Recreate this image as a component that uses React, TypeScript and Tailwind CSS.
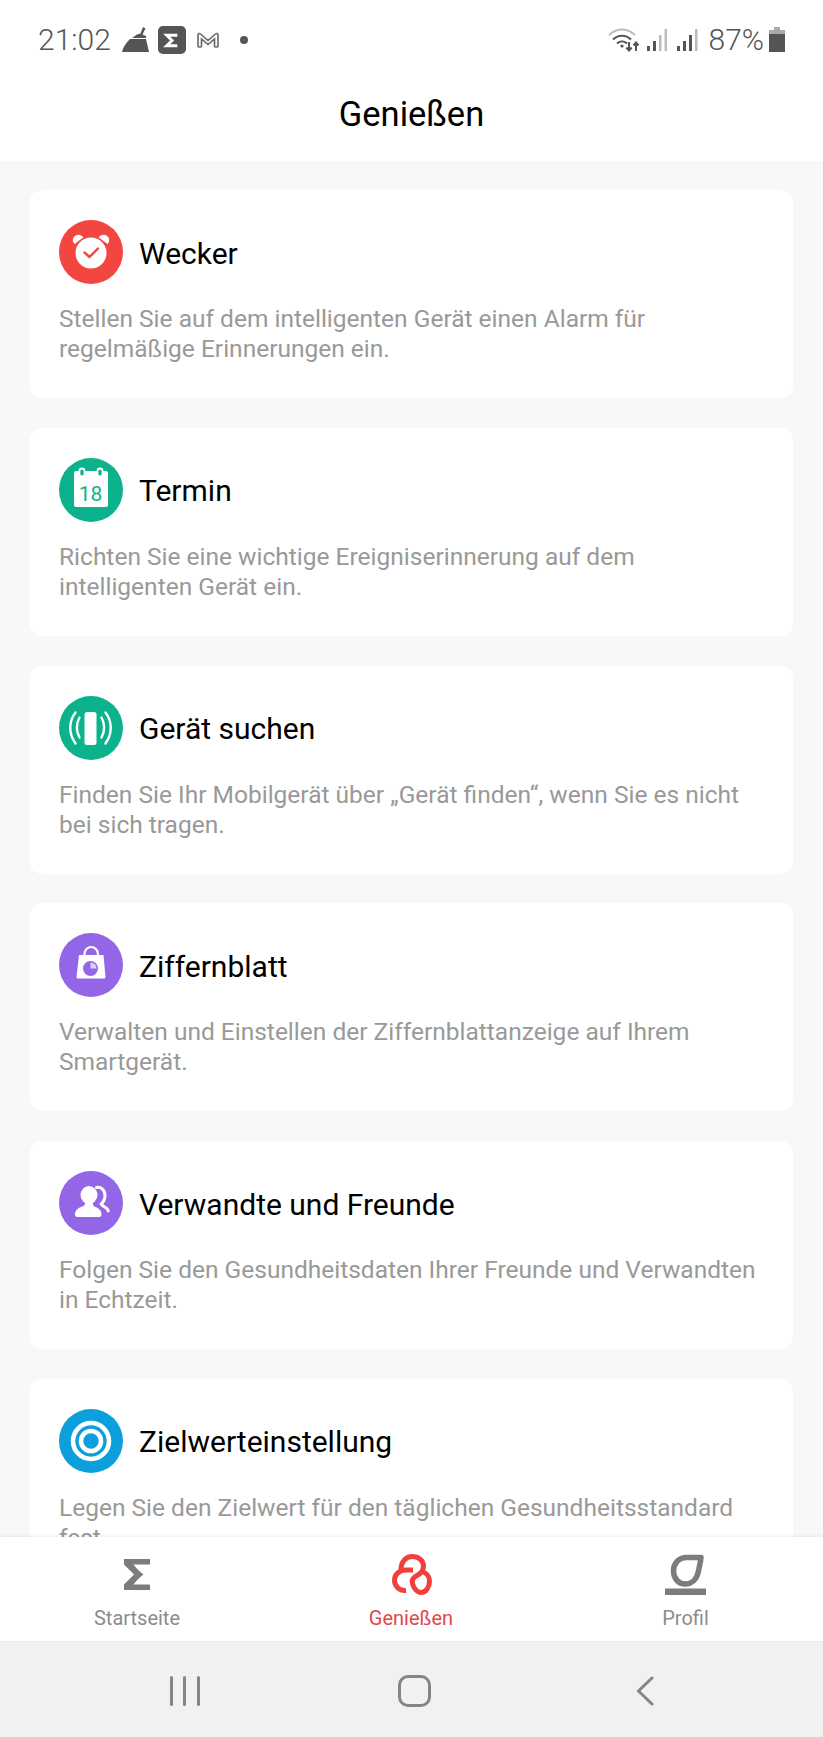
import React from 'react';

const Wecker = () => (
  <svg viewBox="0 0 64 64" className="w-16 h-16">
    <circle cx="32" cy="32" r="32" fill="#f44640" />
    <path d="M15.500 24c-2.800-3-1.800-6.500.8-8.200 2.700-1.700 6-1 8.200 1.500z" fill="#fff" />
    <path d="M48.500 24c2.800-3 1.800-6.500-.8-8.200-2.700-1.700-6-1-8.200 1.500z" fill="#fff" />
    <circle cx="32" cy="33" r="15.500" fill="#fff" />
    <path d="M25.500 32.500l5 4.500 8.500-8.500" fill="none" stroke="#f44640" strokeWidth="2.400" strokeLinecap="round" strokeLinejoin="round" />
  </svg>
);

const Termin = () => (
  <svg viewBox="0 0 64 64" className="w-16 h-16">
    <circle cx="32" cy="32" r="32" fill="#0cb28b" />
    <rect x="15" y="13" width="34" height="36" rx="2" fill="#fff" />
    <rect x="20.500" y="10.500" width="5" height="8" rx="2.500" fill="#0cb28b" stroke="#fff" strokeWidth="1.800" />
    <rect x="38.500" y="10.500" width="5" height="8" rx="2.500" fill="#0cb28b" stroke="#fff" strokeWidth="1.800" />
    <text x="31.500" y="42.500" textAnchor="middle" fontFamily="Roboto, sans-serif" fontSize="21" fill="#0cb28b">18</text>
  </svg>
);

const GeraetSuchen = () => (
  <svg viewBox="0 0 64 64" className="w-16 h-16">
    <circle cx="32" cy="32" r="32" fill="#0cb28b" />
    <rect x="25.500" y="16" width="12" height="33" rx="2.500" fill="#fff" />
    <g fill="none" stroke="#fff" strokeWidth="2.400" strokeLinecap="round">
      <path d="M20.500 21.500c-3.500 6-3.500 14 0 20" />
      <path d="M16.500 16.500c-7 9-7 21.500 0 31" />
      <path d="M42.500 21.500c3.500 6 3.500 14 0 20" />
      <path d="M46.500 16.500c7 9 7 21.500 0 31" />
    </g>
  </svg>
);

const Ziffernblatt = () => (
  <svg viewBox="0 0 64 64" className="w-16 h-16">
    <circle cx="32" cy="32" r="32" fill="#9266e6" />
    <path d="M25.500 24v-3a6.700 7 0 0 1 13.400 0v3" fill="none" stroke="#fff" strokeWidth="2.200" strokeLinecap="round" />
    <path d="M20 22h24.500l2 22a1.500 1.500 0 0 1-1.500 1.500H19a1.500 1.500 0 0 1-1.500-1.500z" fill="#fff" />
    <circle cx="31.500" cy="35.500" r="7.500" fill="#9266e6" />
    <path d="M31.500 29.500a6 6 0 0 1 6 6h-6z" fill="#fff" opacity="0.7" />
  </svg>
);

const Freunde = () => (
  <svg viewBox="0 0 64 64" className="w-16 h-16">
    <circle cx="32" cy="32" r="32" fill="#9266e6" />
    <path d="M37.500 16.500c4.500-.8 8.500 2.500 8.500 8 0 3.500-1.500 6.500-3.800 8.500 1 2 3.500 3 5 4 1.200.8 1.800 1.800 2 3" fill="none" stroke="#fff" strokeWidth="3" strokeLinecap="round" />
    <ellipse cx="30" cy="24" rx="8.500" ry="9" fill="#fff" />
    <path d="M26 30h8v3c0 1.500.8 2.300 2.500 3 3.500 1.500 6 3.500 6 7.500 0 1.500-.8 2.500-2 2.500H18c-1.200 0-2-1-2-2.500 0-4 2.500-6 6-7.500 1.700-.7 4-1.500 4-3z" fill="#fff" />
  </svg>
);

const Zielwert = () => (
  <svg viewBox="0 0 64 64" className="w-16 h-16">
    <circle cx="32" cy="32" r="32" fill="#0b9fdc" />
    <circle cx="32" cy="32" r="18" fill="none" stroke="#fff" strokeWidth="4.600" />
    <circle cx="32" cy="32" r="10" fill="none" stroke="#fff" strokeWidth="4.600" />
  </svg>
);

const cards = [
  { title: 'Wecker', text: 'Stellen Sie auf dem intelligenten Gerät einen Alarm für regelmäßige Erinnerungen ein.', icon: <Wecker /> },
  { title: 'Termin', text: 'Richten Sie eine wichtige Ereigniserinnerung auf dem intelligenten Gerät ein.', icon: <Termin /> },
  { title: 'Gerät suchen', text: 'Finden Sie Ihr Mobilgerät über „Gerät finden“, wenn Sie es nicht bei sich tragen.', icon: <GeraetSuchen /> },
  { title: 'Ziffernblatt', text: 'Verwalten und Einstellen der Ziffernblattanzeige auf Ihrem Smartgerät.', icon: <Ziffernblatt /> },
  { title: 'Verwandte und Freunde', text: 'Folgen Sie den Gesundheitsdaten Ihrer Freunde und Verwandten in Echtzeit.', icon: <Freunde /> },
  { title: 'Zielwerteinstellung', text: 'Legen Sie den Zielwert für den täglichen Gesundheitsstandard fest.', icon: <Zielwert /> },
];

const StatusBar = () => (
  <div className="h-[80px] flex items-center justify-between pl-[38px] pr-[38px] text-[#555555]">
    <div className="flex items-center">
      <span className="text-[30px] leading-none font-light">21:02</span>
      <svg viewBox="0 0 28 28" className="w-7 h-7 ml-[11px]" fill="#555555">
        <path d="M21 1l2.500 1.500-3 6 3.500 1.500v2H10l5-3.500 3.500-1z" />
        <path d="M8 13h16l3 13H0c1-5 4-9 8-13z" />
      </svg>
      <div className="w-7 h-7 ml-[8px] rounded-[5px] bg-[#555555] flex items-center justify-center">
        <svg viewBox="0 0 16 16" className="w-[17px] h-[17px]">
          <path d="M13.500 3H3.500l5 5-5 5h10" fill="none" stroke="#fff" strokeWidth="2.800" />
        </svg>
      </div>
      <svg viewBox="0 0 24 18" className="w-6 h-[18px] ml-[10px]">
        <path d="M2 15V4c0-1.500 1.500-2 2.500-1L12 9.500 19.500 3c1-1 2.500-.5 2.500 1v11a1 1 0 0 1-1 1h-1.500a1 1 0 0 1-1-1V8l-6.500 5.500L5.500 8v7a1 1 0 0 1-1 1H3a1 1 0 0 1-1-1z" fill="none" stroke="#666666" strokeWidth="1.600" />
      </svg>
      <span className="w-2 h-2 rounded-full bg-[#555555] ml-[20px]" />
    </div>
    <div className="flex items-center">
      <svg viewBox="0 0 32 26" className="w-8 h-[26px]">
        <path d="M1 8c8-7.500 18-7.500 26 0" fill="none" stroke="#bbbbbb" strokeWidth="2" />
        <path d="M5 12.500c5.500-5 12.500-5 18 0" fill="none" stroke="#555555" strokeWidth="2" />
        <path d="M9 16.500c3-2.800 7-2.800 10 0" fill="none" stroke="#555555" strokeWidth="2" />
        <circle cx="14" cy="19" r="1.600" fill="#555555" />
        <path d="M21 15v8M18.300 20.500l2.700 3 2.700-3" fill="none" stroke="#555555" strokeWidth="2" />
        <path d="M28 24v-8M25.500 18.500l2.500-3 2.500 3" fill="none" stroke="#555555" strokeWidth="2" />
      </svg>
      <svg viewBox="0 0 22 24" className="w-[22px] h-6 ml-[6px]">
        <rect x="1" y="18" width="3" height="5" fill="#555555" />
        <rect x="7" y="13" width="3" height="10" fill="#555555" />
        <rect x="13" y="7" width="2.500" height="16" fill="#bbbbbb" />
        <rect x="18.500" y="1" width="2.500" height="22" fill="#bbbbbb" />
      </svg>
      <svg viewBox="0 0 22 24" className="w-[22px] h-6 ml-[8px]">
        <rect x="1" y="18" width="3" height="5" fill="#555555" />
        <rect x="7" y="13" width="3" height="10" fill="#555555" />
        <rect x="13" y="7" width="3" height="16" fill="#555555" />
        <rect x="19" y="1" width="2.500" height="22" fill="#bbbbbb" />
      </svg>
      <span className="text-[30px] leading-none font-light ml-[11px]">87%</span>
      <svg viewBox="0 0 16 26" className="w-4 h-[26px] ml-[5px]">
        <rect x="5" y="0" width="6" height="3" fill="#aaaaaa" />
        <rect x="0" y="3" width="16" height="4" fill="#aaaaaa" />
        <rect x="0" y="7" width="16" height="18" fill="#555555" />
      </svg>
    </div>
  </div>
);

const BottomNav = () => (
  <div className="relative z-10 h-[104px] bg-white shadow-[0_-1px_4px_rgba(0,0,0,0.08)] flex pt-[17px]">
    <div className="w-[274px] flex flex-col items-center">
      <div className="h-[41px] flex items-center">
        <svg viewBox="0 0 26 31" className="w-[26px] h-[31px]" fill="#7c7c7c">
          <path d="M0 0H26V5.500H9.500C12 9 15 12 19.500 15.500 15 19 12 22 9.500 25.500H26V31H0V25.500C3 22 7 19 10 15.500 7 12 3 9 0 5.500z" />
        </svg>
      </div>
      <span className="mt-[11px] text-[20px] leading-[24px] text-[#8c8c8c]">Startseite</span>
    </div>
    <div className="w-[274px] flex flex-col items-center">
      <svg viewBox="0 0 40 41" className="w-10 h-[41px] ml-[2px]">
        <g fill="none" stroke="#f1403c" strokeWidth="5">
          <path d="M14 36.500C7 37 2.500 32 2.500 26 2.500 20 8 16 14 16H21" />
          <path d="M9 15C9 8 14 2.500 20 2.500 27 2.500 31.500 7 31.500 12 31.500 17 28 20 25 21.500 21 23.500 19.500 26 20.500 29.500 21.500 34 25 38.500 29 38.500 34 38.500 37.500 33 37.500 27 37.500 22 34 19 31 18" />
        </g>
      </svg>
      <span className="mt-[11px] text-[20px] leading-[24px] text-[#e4474c]">Genießen</span>
    </div>
    <div className="flex-1 flex flex-col items-center">
      <svg viewBox="0 0 41 41" className="w-[41px] h-[41px]">
        <path d="M36 3.500H22C13 3.500 8.500 10 8.500 17 8.500 25 14 30 20 30 27 30 32 25 33.500 17 34.500 12 35.500 8 36 3.500z" fill="none" stroke="#7c7c7c" strokeWidth="5.500" strokeLinejoin="round" />
        <rect x="0" y="34.500" width="41" height="6.500" fill="#7c7c7c" />
      </svg>
      <span className="mt-[11px] text-[20px] leading-[24px] text-[#8c8c8c]">Profil</span>
    </div>
  </div>
);

const SystemNav = () => (
  <div className="h-[96px] bg-[#f1f1f1] flex items-start pl-[170px] pt-[34px]">
    <svg viewBox="0 0 30 30" className="w-[30px] h-[30px] mt-[1px]" fill="#858585">
      <rect x="0" y="0" width="3" height="30" rx="1.500" />
      <rect x="13" y="0" width="3" height="30" rx="1.500" />
      <rect x="27" y="0" width="3" height="30" rx="1.500" />
    </svg>
    <div className="w-[33px] h-[32px] ml-[198px] rounded-[10px] border-[3px] border-[#858585]" />
    <svg viewBox="0 0 18 30" className="w-[18px] h-[30px] ml-[205px] mt-[1px]">
      <path d="M16 2L2.500 15 16 28" fill="none" stroke="#858585" strokeWidth="3" strokeLinecap="round" strokeLinejoin="round" />
    </svg>
  </div>
);

export default function App() {
  return (
    <div className="w-[823px] h-[1737px] flex flex-col overflow-hidden bg-white font-['Roboto',sans-serif]">
      <StatusBar />
      <h1 className="h-[81px] pb-[12px] flex items-center justify-center text-[34.500px] font-normal text-black">Genießen</h1>
      <main className="flex-1 min-h-0 overflow-hidden bg-[#f8f8f8] px-[30px] pt-[29px] flex flex-col gap-[29.8px]">
        {cards.map( ( card ) => (
          <div key={card.title} className="shrink-0 h-[208px] bg-white rounded-[12px] pt-[30px] pl-[29px] pr-[29px]">
            <div className="flex items-center gap-4">
              {card.icon}
              <span className="pt-[3px] text-[30px] leading-none text-black">{card.title}</span>
            </div>
            <p className="mt-[20px] text-[24.500px] leading-[30px] text-[#999999]">{card.text}</p>
          </div>
        ) )}
      </main>
      <BottomNav />
      <SystemNav />
    </div>
  );
}
